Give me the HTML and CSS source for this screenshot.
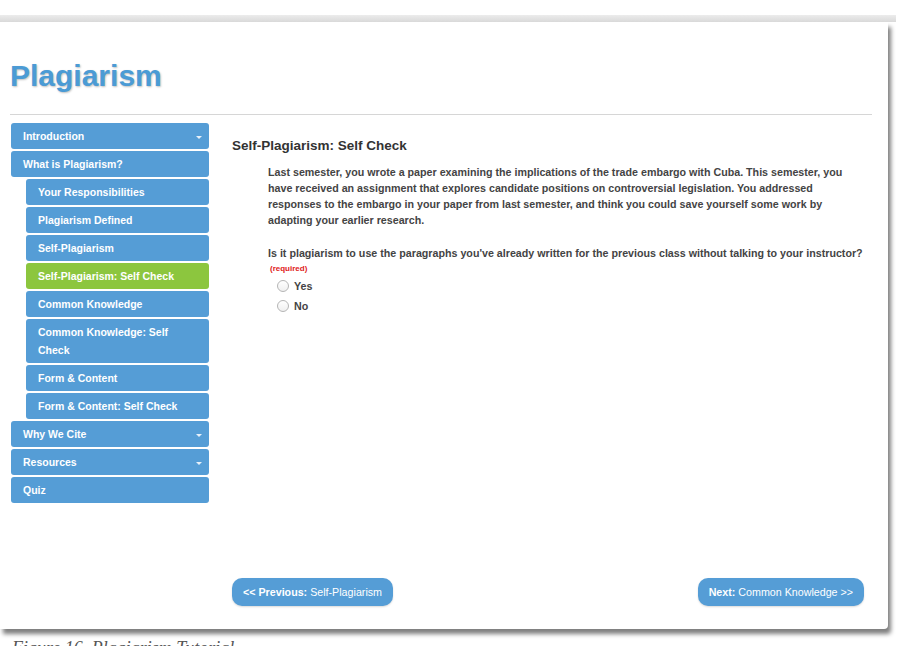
FILE: index.html
```html
<!DOCTYPE html>
<html lang="en">
<head>
    <meta charset="UTF-8">
    <title>Plagiarism Tutorial</title>
    <link rel="stylesheet" href="styles.css">
</head>
<body>
    <div class="topband"></div>

    <div class="window">
        <h1 class="title">Plagiarism</h1>
        <div class="rule"></div>

        <div class="layout">
            <!-- left menu -->
            <ul class="menu">
                <li class="item has-sub">Introduction</li>
                <li class="item">What is Plagiarism?</li>
                <li class="item sub">Your Responsibilities</li>
                <li class="item sub">Plagiarism Defined</li>
                <li class="item sub">Self-Plagiarism</li>
                <li class="item sub active">Self-Plagiarism: Self Check</li>
                <li class="item sub">Common Knowledge</li>
                <li class="item sub">Common Knowledge: Self Check</li>
                <li class="item sub">Form &amp; Content</li>
                <li class="item sub">Form &amp; Content: Self Check</li>
                <li class="item has-sub">Why We Cite</li>
                <li class="item has-sub">Resources</li>
                <li class="item">Quiz</li>
            </ul>

            <!-- page content -->
            <div class="content">
                <h2 class="heading">Self-Plagiarism: Self Check</h2>
                <div class="body">
                    <p class="intro">Last semester, you wrote a paper examining the implications of the trade embargo with Cuba. This semester, you have received an assignment that explores candidate positions on controversial legislation. You addressed responses to the embargo in your paper from last semester, and think you could save yourself some work by adapting your earlier research.</p>
                    <p class="question">Is it plagiarism to use the paragraphs you've already written for the previous class without talking to your instructor?</p>
                    <div class="required">(required)</div>
                    <label class="choice first"><span class="radio"></span>Yes</label>
                    <label class="choice"><span class="radio"></span>No</label>
                </div>

                <div class="pager">
                    <a class="btn" href="#"><b>&lt;&lt; Previous:</b> Self-Plagiarism</a>
                    <a class="btn" href="#"><b>Next:</b> Common Knowledge &gt;&gt;</a>
                </div>
            </div>
        </div>
    </div>

    <p class="caption">Figure 16. Plagiarism Tutorial</p>
</body>
</html>
```

FILE: styles.css
```css
body { margin: 0; padding: 0; background: white; font-family: "Liberation Sans", Arial, sans-serif; overflow: hidden; }
.topband { height: 7px; margin-top: 15px; width: 896px; background: linear-gradient(#ececec, #d9d9d9); }
.window { width: 888px; height: 607px; background: white; box-sizing: border-box; padding: 0 16px 0 10px; display: flex; flex-direction: column; box-shadow: 3px 5px 4px rgba(0,0,0,0.5); border-radius: 0 0 4px 0; }
.title { margin: 0; padding-top: 37px; height: 58px; box-sizing: border-box; font-size: 30px; line-height: 34px; color: #4b9bd5; text-shadow: 1px 1px 2px rgba(0,0,0,0.25); font-weight: bold; }
.rule { height: 1px; background: #d6d6d6; margin-top: 34px; }
.layout { display: flex; flex: 1; padding-top: 8px; }
.menu { list-style: none; margin: 0; padding: 0 0 0 1px; width: 198px; }
.item { position: relative; background: #559dd6; color: white; font-size: 10.5px; font-weight: bold; line-height: 14px; padding: 6px 12px; min-height: 14px; margin-bottom: 2px; border-radius: 3px; }
.item.sub { margin-left: 15px; line-height: 18px; padding: 4px 30px 4px 12px; min-height: 18px; }
.item.active { background: #8cc63e; }
.item.has-sub::after { content: ""; position: absolute; right: 7px; top: 13px; border-left: 3px solid transparent; border-right: 3px solid transparent; border-top: 3px solid #e8f1fa; }
.content { flex: 1; margin-left: 23px; display: flex; flex-direction: column; padding-bottom: 23px; }
.heading { margin: 14px 0 0; font-size: 13.5px; line-height: 18px; color: #333; }
.body { padding-left: 36px; color: #444; font-size: 10.7px; font-weight: bold; }
.intro { margin: 9px 0 0; line-height: 16px; width: 598px; }
.question { margin: 17px 0 0; line-height: 16px; width: 600px; }
.required { color: #e02020; font-size: 8px; line-height: 12px; margin: 2px 0 0 2px; }
.choice { display: flex; align-items: center; margin: 4px 0 0 9px; height: 16px; font-size: 10.7px; }
.choice.first { margin-top: 3px; }
.radio { width: 10px; height: 10px; border: 1px solid #b5b5b5; border-radius: 50%; margin-right: 5px; background: linear-gradient(#fff, #f0f0f0); }
.pager { margin-top: auto; display: flex; justify-content: space-between; padding-right: 8px; }
.btn { display: inline-block; background: #559dd6; color: white; text-decoration: none; font-size: 10.7px; line-height: 28px; height: 28px; padding: 0 11px; border-radius: 10px; box-shadow: 0 1px 2px rgba(0,0,0,0.15); }
.caption { margin: 9px 0 0 12px; font-family: "Liberation Serif", serif; font-style: italic; font-size: 18px; line-height: 20px; color: #555; }
```
